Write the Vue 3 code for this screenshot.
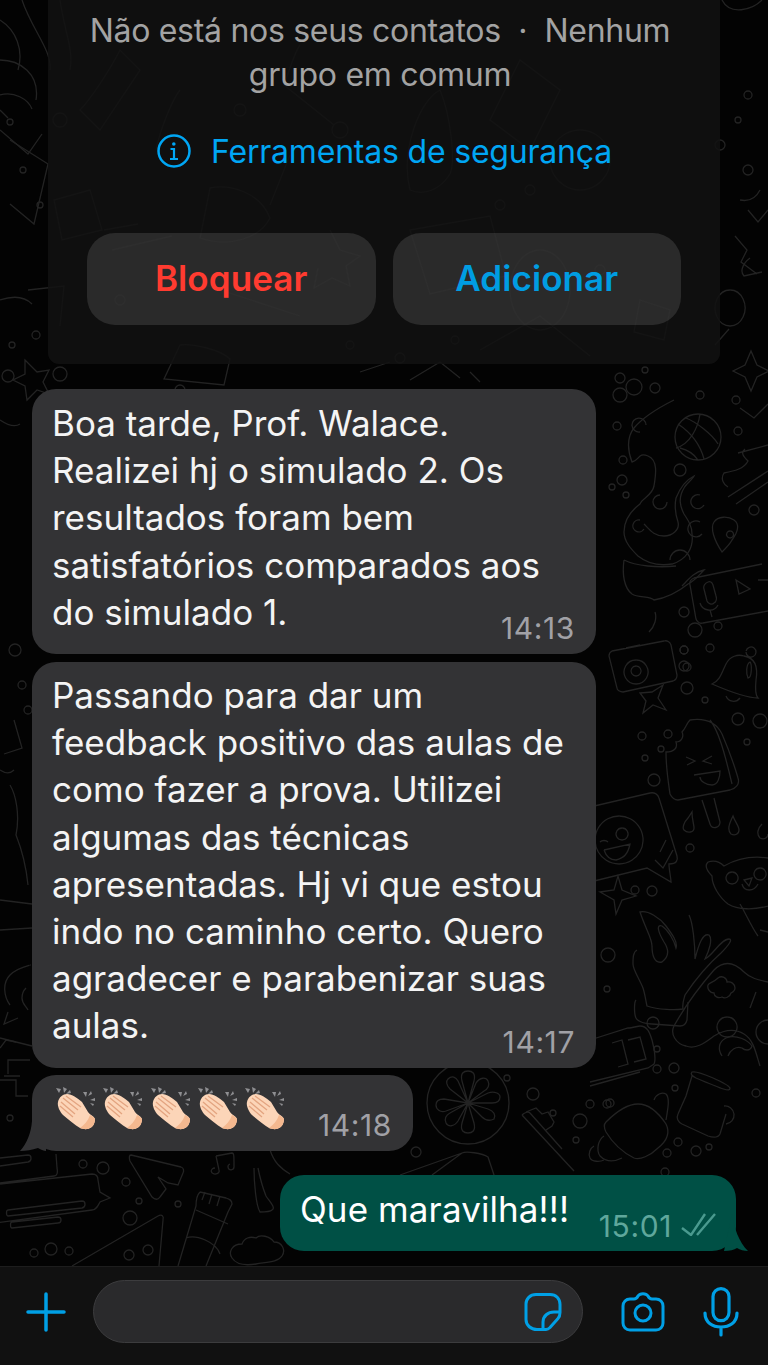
<script setup>
const dots = [
  [8,376,6],[60,374,7],[620,395,7],[634,387,8],[655,388,5],[617,426,4],[623,460,4],[622,480,5],[612,487,3],[626,495,3],
  [680,470,6],[736,400,4],[738,431,4],[754,510,5],[684,612,5],[695,630,7],[718,626,4],[684,650,4],[710,648,4],[687,667,4],
  [684,650,4],[684,666,5],[687,688,6],[705,700,3],[738,719,6],[760,721,7],[747,742,3],[642,736,4],[668,734,4],[661,749,3],
  [645,758,3],[654,780,6],[690,848,4],[635,890,4],[652,891,5],[608,955,7],[607,989,3],[653,1023,6],[657,1049,3],[657,1069,4],
  [674,1068,5],[675,1088,3],[756,1093,4],[607,1104,4],[507,1078,3],[533,1094,6],[590,1104,4],[610,1103,4],[553,1113,3],
  [580,1121,7],[576,1140,3],[678,1142,4],[667,1153,4],[696,1151,5],[709,1147,3],[665,1172,4],[416,1152,5],[83,1164,4],
  [103,1168,6],[126,1182,4],[139,1201,3],[178,1204,3],[130,1218,7],[34,1253,4],[51,1249,6],[69,1251,4],[129,1255,5],
  [148,1250,5],[15,650,6],[22,685,4],[28,710,4],[10,1118,3],[120,400,4],[180,390,5],[700,395,4],[36,335,4],[12,345,3],
  [40,205,3],[23,170,3],[500,205,5],[530,190,5],[350,345,4],[400,358,5],[455,340,4],[620,378,5],[645,370,3],[10,122,3],
  [720,145,5],[748,95,4],[738,120,3],[748,170,5],[60,120,7],[340,130,8],[405,80,5],[120,300,5],[240,110,6],[600,270,5]
]

const doodles = [
  // basketball
  'M675 437a23 23 0 1 0 46 0a23 23 0 1 0-46 0M678 424c12 8 22 20 26 35M700 414c-2 14-10 30-24 34M686 418c10 4 26 16 32 26M680 448c8 2 14 6 18 12',
  // octopus
  'M674 400c-16 8-30 16-40 28c-8 10-6 24-2 34c8-2 6-10 16-6c10 4 8 18 6 30c-2 10-12 12-14 18c-8 6-16 14-16 28c0 10 8 18 14 24c10 8 22 10 34 8c14-4 22-16 20-30c0-8-4-14-8-20c-4-8-6-16 0-26c2-4 8-8 10-12c-8 4-14 12-18 22c-2 10 0 18 2 24c2 8-6 14-14 14c-10 0-14-6-20-12',
  'M624 560c-2 14 0 28 8 34c6 4 18 2 22 6c12-2 24-8 34-16c8-4 12-10 16-14c-10 2-16 10-22 16M624 560c12 6 34 8 52 6',
  'M640 432a7 7 0 1 1 6-7M660 495a7 7 0 1 0 7 7M640 520a6 6 0 1 0 4 9M700 495a7 7 0 1 0 4 10M700 522a8 8 0 1 0 2 12M670 560a10 10 0 0 1 20 0M655 612c2 6 0 14-6 20',
  // location pin
  'M722 552c-8-12-12-24-8-30c4-6 14-6 20-2c6 4 4 12-2 20c-2 4-6 8-10 12zM730 531a3.500 3.500 0 1 0 .1 0',
  // voice card
  'M694 578l68-14M694 578c-3 1-5 4-4 7l6 34c1 3 4 5 7 4l65-12M708 582c-3 1-5 4-4 7l3 12c1 3 5 4 7 2c2-1 3-4 2-7l-3-11c-1-3-3-4-5-3zM700 603c2 8 14 10 18 2M710 610l2 7M736 580l14 9l-11 5zM758 580h10',
  // knife / pen
  'M738 453l30-8M728 487c-4-2-8-8-4-14c10-2 20-4 24-12c-4-4-8-8-3-12M728 497l40-26M736 504l32-22',
  // check box top right
  'M740 408l14 10l14-14',
  // camera
  'M612 651l52-10c3-1 6 1 7 4l6 30c0 3-1 5-4 6l-50 11c-3 0-6-2-6-4l-8-32c0-2 1-4 3-5zM636 660a12 12 0 1 0 .1 0M636 666a5 5 0 1 0 .1 0M626 648l14-3',
  // star
  'M640 693l12-1l11-7l-5 13l8 12l-13-5l-10 8l3-12z',
  // bell
  'M712 684c8-3 10-12 14-20c4-8 12-10 18-8c12 2 14 12 12 24c-1 10 0 16 2 18c-12 0-32-8-46-14zM746 652a5 5 0 1 0 .1-1M750 662c-4 2-4 12-2 16c4 0 4-14 2-16zM726 696a8 8 0 0 0 14 2',
  // popsicle
  'M690 720c14-2 26 2 32 14c6 14 12 30 16 44c2 6-2 10-8 12l-52 10c-4 0-6-2-8-6c-2-14-4-26-4-42c8 0 12-4 10-10c6 0 8-6 6-10c4-4 4-8 8-12zM710 720c8 10 14 30 22 64M702 800l8 24c2 6 10 4 10-2l-6-24M686 757l9 4l-8 4M712 756l-9 5l9 3M694 775l26-4c0 6-2 14-8 14c-6 0-12-4-12-8',
  // drops
  'M688 818c-4 4-6 10-4 12c4 4 10 2 10-2c0-4-2-8-2-16zM733 816c-4 8-6 14-2 18c4 2 8 0 8-4c0-4-4-8-6-14zM762 824c-4 4-6 10-2 14c4 2 8 0 8-4',
  // emoji card
  'M590 807l60-14c4-1 8 1 9 5l18 58c1 4 0 8-8 8c0 6 2 14 2 18l-24-14l-57 14',
  'M619 816a24 24 0 1 0 .1 0M622 828a6 6 0 1 0 .1 0M600 842c2-2 6-2 8 0M604 850l26-6c-2 10-6 14-14 16c-6 0-10-4-12-10M655 860l8 8l10-18M660 852l6-12',
  // cat
  'M708 862c-4 4 0 10 4 14c0 10 8 22 16 28c10 6 26 6 40 2M708 862c6-2 12 0 16 4c14-8 30-10 44-8M732 872a6 6 0 1 0 .1 0M760 868a6 6 0 1 0 .1 0M744 880l8-2l-3 8zM742 884c2 8 12 8 16 0M740 904c6 10 12 24 18 32M760 930l8 2',
  // star 2
  'M600 892l14-2l4-14l4 14l14 6l-14 4l-6 14l-2-14z',
  // hand
  'M637 950c-4 2-4 8-4 14c0 6 6 14 10 24c2 6 3 14 4 18c12 4 28 4 36 3c-1-6 1-10 2-14c8-12 20-28 36-42c8-8 12-14 8-14c-8 0-16 16-24 20c4-8 8-20 4-24c-6-2-10 8-14 24c0-14-2-36-6-44M636 1000c-2 2-2 14 0 18c2 4 10 6 16 6l28 2c4 0 6-2 7-6l1-18M640 912c8-2 20 6 26 14c6 8 12 16 10 22c-2-8-8-18-14-22c-6-2-4 6 2 16c4 6 6 14-2 20c-8 2-10-8-10-16c0-8-6-16-12-34z',
  // game controller
  'M674 1026c10-18 26-40 40-56c10-10 20-8 30 2c6 6 14 8 24 10M674 1026c-4 8 2 18 12 20c10 4 20-4 28-10c10-6 20-8 30-2c10 6 12 20 16 32M718 978c4-3 9 0 9 4c4-1 8 2 8 6c0 2-2 4-4 5c-1 4-6 6-9 4c-4 2-8-1-8-4c-4 0-7-4-6-8c1-2 6-3 10-7zM756 992l-6 16M727 1017a10 10 0 1 0 .1 0M768 1020a12 12 0 1 0 0 24',
  // leaf
  'M722 1056c-4-6-4-14 4-18c10-4 22 2 26 8c-2 6-8 4-10 2c-6-2-12 2-14 8',
  // clock card
  'M590 1040l38-12c4 0 10-2 12-2c8 0 10 8 12 14c2 8 4 20 2 24l-6 4l-58 14M640 1072l-50 14M612 1043l10-3l6 24l-10 3M628 1040l12-3l6 22l-12 3',
  // mug
  'M692 1072c6-2 36 12 38 16c0 4-6 2-34-10c-4-2-6-4-4-6zM692 1076l-6 20l-8 18c-2 4 0 8 4 10l26 12c6 2 10 2 12-2l6-20M724 1106a9 9 0 1 1 2 18',
  // croissant
  'M606 1122c10-10 22-18 32-18c10 0 20 8 28 20c4 8 2 16-8 24c-8 8-18 12-24 10c-12-6-22-16-28-26c-2-4-2-8 0-10zM654 1100c2-6 8-8 12-6c4 4 2 14 0 26M604 1136c-6 4-8 14-4 20c6 6 14 6 22 2M594 1146c-4 2-6 8-4 12c2 4 10 4 14 2',
  // orange
  'M427 1103a41 41 0 1 0 82 0a41 41 0 1 0-82 0M468 1103l-6-22c-2-8 2-10 6-10c4 0 8 2 6 10zM468 1103l8-20c4-6 10-6 12-2c2 4 0 8-4 10zM468 1103l20-10c6-2 12 0 12 4c0 4-2 6-8 6zM468 1103l20 6c6 2 8 6 6 10c-4 2-8 2-12-2zM468 1103l6 20c2 8-2 10-6 10c-4 0-8-2-6-10zM468 1103l-10 18c-4 6-10 6-12 2c-2-4 0-8 4-10zM468 1103l-22 8c-6 2-10-2-10-6c0-4 2-6 8-6zM468 1103l-18-14c-4-4-4-8-2-10c4-4 8-2 10 2z',
  // toothbrush
  'M522 1115l52 56M522 1115c2-2 6-4 8-2l32 36M526 1112l10-4l6 6l6-2l6 10l-2 4l-6 4',
  // paper / book by orange
  'M400 1175l62-22c4-2 20 0 26 4l10 30M462 1153l-30 22',
  // chat lines bottom-left
  'M0 1183l54-7c3 0 4-3 3-8l-1-14M0 1158l28-3c4 0 4 6 0 7l-28 4M0 1184l92-10c4 0 6 2 6 6l2 12l10 6l-10 4c-2 4-4 8-8 8l-96 13M8 1210l74-9c4 0 4 6 0 7l-74 8c-2 0-2-6 0-6zM12 1222l46-5c4 0 4 6 0 6l-46 5c-2 0-2-6 0-6z',
  // slice
  'M131 1155l50 12c3 1 3 4 2 6l-5 12l-10-2l-10-6l8 12l-6 8c-2 3-5 3-8 0l-22-36c-1-3-1-6 1-6z',
  // note
  'M216 1156l16-3c2 0 2 2 2 14M216 1156l3 14M219 1170a4 3 0 1 1-4-2M234 1167a3 3 0 1 1-4-3',
  // brush
  'M200 1192l26 6c3 1 6 2 6 6l-4 8l-22 54M200 1192c-2 2-4 8-4 14l-18 60M196 1210l32 14M186 1238c10-4 30 4 34 16M205 1192l-3 8M212 1194l-3 10M220 1196l-3 10',
  // cloud
  'M232 1258c-4-6 0-14 10-14c2-6 8-8 14-6c4-4 14-2 18 4c8 0 12 8 8 14c-4 6-14 6-26 8c-12 2-20 0-24-6z',
  // triangle bottom left
  'M72 1266l86-50c4-2 6 0 5 4l-4 46',
  // hand / dog bit above green
  'M258 1168c2 10 4 18 8 28c4 6 10 12 6 14c-2 2-10 2-12 2c-4-6-6-30-6-44M270 1150c4 12 10 18 20 24',
  // whatsapp logo left
  'M10 1005c-6-8-8-22 0-30c8-8 22-10 20-10M28 1010c-2-4-6-6-6-12c0-6 2-8 4-10M8 1012l-4 12l14-6',
  // left doodle strokes
  'M0 770c6 4 10 4 14 0M14 720l8 28l-18 6M10 785c6 10 10 30 6 50c4 10 10 30 12 50M0 900l32 4M0 930l32-2M0 1048l6-8l10 2M0 1080h16v16h12M4 1076h16',
  'M0 1038l32 8M30 1060h-22v14',
  // top left
  'M0 20c16 10 24 30 18 50M22 0c10 30 30 50 28 70M0 95c14-4 28 4 32 14M0 110l8 8M10 140l38 24l-14 60l-24-20',
  // star left
  'M25 360l12 12l12-2l-6 12l6 12l-12-4l-10 10l-2-14l-12-6l12-6z',
  'M0 420c6 4 14 8 20 4M0 130l28 24l14-20M0 300c12-4 24-4 32 4',
  // through the card
  'M120 50c-10 20-30 50-40 60l20 20l40-60zM180 90c-8 10-20 40-24 60M300 45c-6 8-12 30-16 40l50 40M440 90c-20 10-40 60-30 100c14 6 30 0 40-16c6-14 0-60-10-84zM520 60l-30 60l40 30l30-60zM580 130a30 30 0 1 0 .1 0M90 190l-36 10l8 40l40-10zM104 230l34-6M112 250l60-14M210 188c20-4 50 4 60 30c-10 20-40 30-70 20zM290 155l-20 50M330 230l10 20l20 6l-14 10l4 20l-18-8l-18 10l4-20M410 230l80-14l16 60l-76 18zM190 280l110 36M540 250a30 40 0 1 0 .1 0M480 350l60-34l50 40M640 300l30 10l-6 30l-30-8z',
  'M750 258c-8 6-10 14-6 18l18-4M735 236l12 14l-6 12l16 12M730 290a15 18 0 1 0 .1 0M715 345l14-16M745 365l6-14l6 14l12 6l-12 6l-6 14l-6-14l-12-6z',
  'M180 345c10-2 40 4 50 14l-6 26l-60-6zM360 372l30-10M410 380l30-18l20 16M470 372l10 10',
  // pencil behind top-left
  'M60 0c4 30 14 50 10 70M0 60c20 0 40 14 36 40M28 290l36-4l-4 40',
  'M722 0c8 16 30 10 40 0M748 210l10 12l10-12M760 190c-4 8-10 12-20 10'
]

const claps = [1, 2, 3, 4, 5]
</script>

<template>
  <div class="page">
    <svg class="wallpaper" width="768" height="1365" viewBox="0 0 768 1365" fill="none">
      <path v-for="(d, i) in doodles" :key="i" :d="d" />
      <circle v-for="(c, i) in dots" :key="'c' + i" :cx="c[0]" :cy="c[1]" :r="c[2]" />
    </svg>

    <section class="notice">
      <p class="notice-text">Não está nos seus contatos&nbsp; ·&nbsp; Nenhum<br />grupo em comum</p>
      <div class="safety">
        <svg width="36" height="36" viewBox="0 0 36 36" fill="none" stroke="currentColor">
          <circle cx="18" cy="18" r="15.500" stroke-width="2.500" />
          <circle cx="17.800" cy="11" r="1.800" fill="currentColor" stroke="none" />
          <path d="M14.500 16h3.500v10M14 26h8" stroke-width="2.200" />
        </svg>
        <span>Ferramentas de segurança</span>
      </div>
      <div class="notice-actions">
        <button type="button" class="action action--block">Bloquear</button>
        <button type="button" class="action action--add">Adicionar</button>
      </div>
    </section>

    <main class="chat">
      <div class="bubble">
        Boa tarde, Prof. Walace.<br />
        Realizei hj o simulado 2. Os<br />
        resultados foram bem<br />
        satisfatórios comparados aos<br />
        do simulado 1.
        <span class="time">14:13</span>
      </div>
      <div class="bubble bubble--second">
        Passando para dar um<br />
        feedback positivo das aulas de<br />
        como fazer a prova. Utilizei<br />
        algumas das técnicas<br />
        apresentadas. Hj vi que estou<br />
        indo no caminho certo. Quero<br />
        agradecer e parabenizar suas<br />
        aulas.
        <span class="time">14:17</span>
      </div>
      <div class="bubble bubble--claps">
        <svg class="tail tail--in" width="26" height="30" viewBox="0 0 26 30">
          <path d="M12 0C11 12 7 22 0 30C6 30 12 29 18 27C20 28 24 30 26 30V0Z" />
        </svg>
        <svg v-for="n in claps" :key="n" class="clap" width="40" height="44" viewBox="0 0 40 44" role="img" aria-label="👏">
          <path d="M1 1l3 5l2-4zM8 0l1 6l3-4zM15 3l-4 4l5-1z" fill="#8f8f92" />
          <path d="M28 5l3 5l1-5zM36 4l-3 5l4-2zM40 11l-5 2l5 1zM39 17l-4-1l3 3z" fill="#8f8f92" />
          <path d="M3 15C4 10 8 7 12 7C17 7 22 11 27 15L33 25C35 28 39 29 40 32C40 36 38 40 35 41C32 43 28 42 25 41C20 38 14 33 8 28C5 25 2 19 3 15Z" fill="#fcd5b8" />
          <path d="M25 41C28 42 32 43 35 41C38 40 40 36 40 32C39 30 37 29 35 28C33 34 29 38 25 41Z" fill="#f4b88f" />
          <path d="M6 15L20 27M5 19L18 30M8 11L23 23M11 9L26 20" stroke="#e3a480" stroke-width="1.300" fill="none" />
        </svg>
        <span class="time">14:18</span>
      </div>
      <div class="bubble bubble--out">
        <svg class="tail tail--out" width="24" height="37" viewBox="0 0 24 37">
          <path d="M8 0C10 14 15 28 24 37C20 37 16 36 13 34C10 36 6 37 0 37Z" />
        </svg>
        <span class="out-text">Que maravilha!!!</span>
        <span class="meta">
          <span class="time-out">15:01</span>
          <svg class="ticks" width="36" height="24" viewBox="0 0 36 24" fill="none" stroke="#4a9a8f" stroke-width="2.400">
            <path d="M2 16l9 7L25 2M17 23L35 2" />
          </svg>
        </span>
      </div>
    </main>

    <footer class="composer">
      <svg class="icon-plus" width="40" height="40" viewBox="0 0 40 40" fill="none" stroke="#00a0e6" stroke-linecap="round">
        <path d="M20 2v36M2 20h36" stroke-width="3.500" />
      </svg>
      <div class="input">
        <svg width="38" height="38" viewBox="0 0 38 38" fill="none" stroke="#00a0e6" stroke-width="3">
          <path d="M12 1.500h14c6 0 10 4 10 10v8c0 3-1 5-2 6l-8 9c-1 1-2 2-4 2h-9c-6 0-11-4-11-10V11c0-5 4-9.500 10-9.500z" />
          <path d="M36 19h-6c-6 0-11 4-11 10v7" />
        </svg>
      </div>
      <svg class="icon-cam" width="44" height="40" viewBox="0 0 44 40" fill="none" stroke="#00a0e6" stroke-width="3">
        <path d="M9 7h4c2 0 3-1 4-3c2-3 8-3 10 0c1 2 2 3 4 3h4c4 0 7 3 7 7v17c0 4-3 7-7 7H9c-4 0-7-3-7-7V14c0-4 3-7 7-7z" />
        <circle cx="22" cy="21" r="8" />
      </svg>
      <svg class="icon-mic" width="36" height="50" viewBox="0 0 36 50" fill="none" stroke="#00a0e6" stroke-width="3.200" stroke-linecap="round">
        <rect x="10" y="1.600" width="16" height="32" rx="8" />
        <path d="M2 26c0 10 8 14 16 14s16-4 16-14M18 40v8" />
      </svg>
    </footer>
  </div>
</template>

<style scoped>
.page {
  position: relative;
  width: 768px;
  height: 1365px;
  overflow: hidden;
  display: flex;
  flex-direction: column;
  background: #030303;
  font-family: Inter, "Liberation Sans", sans-serif;
  color: #f2f2f2;
}
.wallpaper {
  position: absolute;
  inset: 0;
  stroke: #232323;
  stroke-width: 1.300;
}
.notice {
  position: relative;
  box-sizing: border-box;
  flex: none;
  width: 672px;
  height: 364px;
  margin-left: 48px;
  padding-top: 9px;
  background: rgba(17, 17, 18, 0.86);
  border-radius: 0 0 11px 11px;
  text-align: center;
}
.notice-text {
  margin: 0;
  padding-right: 8px;
  font-size: 32px;
  line-height: 44px;
  letter-spacing: -0.3px;
  color: #a3a3a3;
}
.safety {
  display: flex;
  justify-content: center;
  align-items: center;
  gap: 19px;
  margin-top: 34px;
  height: 40px;
  font-size: 32px;
  letter-spacing: -0.2px;
  color: #00a6f4;
}
.notice-actions {
  display: flex;
  gap: 17px;
  margin: 62px 39px 0;
}
.action {
  flex: 1;
  height: 92px;
  padding-bottom: 3px;
  border: none;
  border-radius: 28px;
  background: rgba(255, 255, 255, 0.115);
  font: 600 35px Inter, "Liberation Sans", sans-serif;
  letter-spacing: 0.1px;
}
.action--block {
  color: #ff3b30;
}
.action--add {
  color: #009de2;
}
.chat {
  position: relative;
  flex: 1;
  display: flex;
  flex-direction: column;
  padding-top: 25px;
}
.bubble {
  position: relative;
  box-sizing: border-box;
  width: 564px;
  margin-left: 32px;
  padding: 11px 20px 18px;
  background: #333335;
  border-radius: 24px;
  font-size: 35px;
  line-height: 47.200px;
  color: #f4f4f4;
}
.bubble--second {
  margin-top: 8px;
  padding-top: 10px;
  padding-bottom: 18.400px;
}
.bubble--claps {
  display: flex;
  width: 381px;
  height: 76px;
  margin-top: 7px;
  padding: 12px 0 0 23px;
  gap: 7.300px;
}
.bubble--out {
  display: flex;
  align-items: flex-start;
  width: 456px;
  height: 76px;
  margin: 24px 0 0 280px;
  padding: 11px 20px 0;
  background: #005045;
  color: #fff;
}
.out-text {
  letter-spacing: 0.1px;
}
.tail {
  position: absolute;
}
.tail--in {
  left: -12px;
  bottom: 0;
  fill: #333335;
}
.tail--out {
  right: -12px;
  bottom: 0;
  fill: #005045;
}
.clap {
  flex: none;
}
.time {
  position: absolute;
  right: 21px;
  bottom: 8px;
  font-size: 30px;
  line-height: 36px;
  letter-spacing: 0.6px;
  color: #a1a1a6;
}
.meta {
  position: absolute;
  right: 20px;
  bottom: 7px;
  display: flex;
  align-items: center;
  gap: 8px;
}
.time-out {
  font-size: 30px;
  line-height: 36px;
  letter-spacing: 0.6px;
  color: #5fa79c;
}
.ticks {
  margin-top: -4px;
}
.composer {
  position: relative;
  box-sizing: border-box;
  flex: none;
  height: 99px;
  display: flex;
  background: #111111;
  border-top: 1px solid #1d1d1d;
}
.icon-plus {
  flex: none;
  margin: 25px 0 0 26px;
}
.input {
  flex: none;
  box-sizing: border-box;
  display: flex;
  justify-content: flex-end;
  align-items: center;
  width: 490px;
  height: 63px;
  margin: 13px 0 0 27px;
  padding-right: 20px;
  background: #2a2a2c;
  border: 1px solid #3c3c3e;
  border-radius: 32px;
}
.icon-cam {
  flex: none;
  margin: 25px 0 0 38px;
}
.icon-mic {
  flex: none;
  margin: 20px 0 0 38px;
}
</style>
